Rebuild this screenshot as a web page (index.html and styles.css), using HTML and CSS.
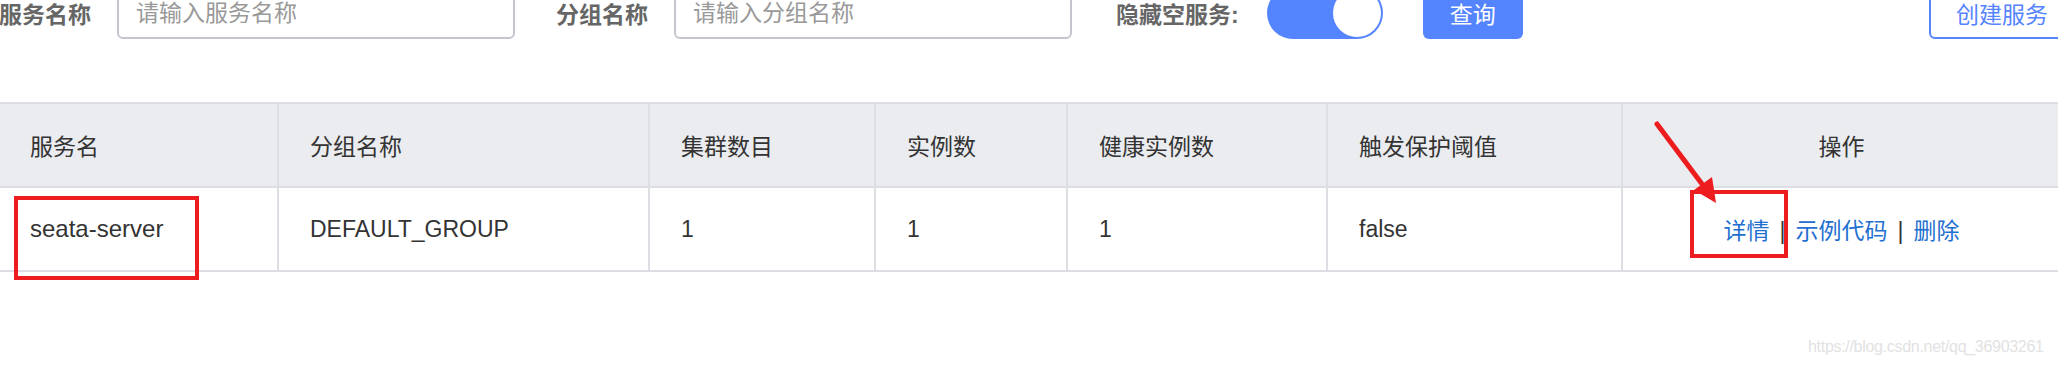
FILE: index.html
```html
<!DOCTYPE html>
<html lang="zh-CN">
<head>
  <meta charset="UTF-8">
  <title>服务列表</title>
  <link rel="stylesheet" href="styles.css">
</head>
<body>

  <div class="toolbar">
    <div class="field">
      <label class="field-label">服务名称</label>
      <input class="field-input" type="text" placeholder="请输入服务名称">
    </div>
    <div class="field field-group">
      <label class="field-label">分组名称</label>
      <input class="field-input" type="text" placeholder="请输入分组名称">
    </div>
    <div class="field">
      <label class="field-label switch-label">隐藏空服务:</label>
      <span class="switch"><span class="switch-knob"></span></span>
    </div>
    <button class="btn btn-primary">查询</button>
    <button class="btn btn-outline">创建服务</button>
  </div>

  <table class="service-table">
    <colgroup>
      <col style="width: 277px">
      <col style="width: 371px">
      <col style="width: 226px">
      <col style="width: 192px">
      <col style="width: 260px">
      <col style="width: 295px">
      <col>
    </colgroup>
    <thead>
      <tr>
        <th>服务名</th>
        <th>分组名称</th>
        <th>集群数目</th>
        <th>实例数</th>
        <th>健康实例数</th>
        <th>触发保护阈值</th>
        <th class="center">操作</th>
      </tr>
    </thead>
    <tbody>
      <tr>
        <td class="name">seata-server</td>
        <td>DEFAULT_GROUP</td>
        <td>1</td>
        <td>1</td>
        <td>1</td>
        <td>false</td>
        <td class="center">
          <a class="link" href="#">详情</a><span class="sep">|</span><a class="link" href="#">示例代码</a><span class="sep">|</span><a class="link" href="#">删除</a>
        </td>
      </tr>
    </tbody>
  </table>

  <!-- annotations drawn on top of the screenshot -->
  <div class="mark mark-name"></div>
  <div class="mark mark-detail"></div>
  <svg class="arrow" width="2058" height="366" viewBox="0 0 2058 366">
    <line x1="1657" y1="124" x2="1705" y2="188" stroke="#ec1c1f" stroke-width="5" stroke-linecap="round"/>
    <polygon points="1716,203 1694,190 1712,177" fill="#ec1c1f"/>
  </svg>

  <div class="watermark">https://blog.csdn.net/qq_36903261</div>

</body>
</html>
```

FILE: styles.css
```css
body {
  margin: 0;
  width: 2058px;
  height: 366px;
  overflow: hidden;
  position: relative;
  background: #fff;
  font-family: "Liberation Sans", "Noto Sans CJK SC", sans-serif;
  font-size: 23px;
  color: #333;
}

.toolbar {
  display: flex;
  align-items: center;
  height: 52px;
  margin-top: -13px;
  margin-left: -1px;
}

.field {
  display: flex;
  align-items: center;
  margin-right: 41px;
}

.field-group {
  margin-right: 44px;
}

.field-label {
  font-weight: bold;
  color: #666;
  margin-right: 26px;
}

.switch-label {
  margin-right: 28px;
}

.field-input {
  box-sizing: border-box;
  width: 398px;
  height: 52px;
  padding: 0 17px;
  border: 2px solid #c4c6cf;
  border-radius: 6px;
  font-family: inherit;
  font-size: 23px;
  color: #333;
  outline: none;
}

.field-input::placeholder {
  color: #999;
}

.switch {
  box-sizing: border-box;
  display: flex;
  justify-content: flex-end;
  align-items: center;
  width: 116px;
  height: 52px;
  padding: 2px;
  border-radius: 26px;
  background: #5584ff;
  margin-right: -1px;
}

.switch-knob {
  width: 48px;
  height: 48px;
  border-radius: 50%;
  background: #fff;
}

.btn {
  box-sizing: border-box;
  height: 52px;
  border-radius: 6px;
  font-family: inherit;
  font-size: 23px;
  cursor: pointer;
}

.btn-primary {
  width: 100px;
  border: none;
  background: #5584ff;
  color: #fff;
}

.btn-outline {
  margin-left: auto;
  margin-right: -17px;
  padding: 0 25px;
  border: 2px solid #5584ff;
  background: #fff;
  color: #5584ff;
}

.service-table {
  width: 100%;
  margin-top: 63px;
  table-layout: fixed;
  border-collapse: separate;
  border-spacing: 0;
  border-top: 2px solid #dcdee3;
}

.service-table th,
.service-table td {
  box-sizing: border-box;
  height: 84px;
  padding: 0 0 0 31px;
  border-bottom: 2px solid #dcdee3;
  border-left: 2px solid #dcdee3;
  text-align: left;
  font-weight: normal;
  white-space: nowrap;
}

.service-table th:first-child,
.service-table td:first-child {
  border-left: none;
  padding-left: 30px;
}

.service-table th {
  background: #ebecf0;
}

.service-table .name {
  font-size: 24px;
}

.service-table .center {
  text-align: center;
  padding: 0 0 0 2px;
}

.link {
  color: #1f6fd0;
  text-decoration: none;
}

.sep {
  margin: 0 10px;
  color: #333;
}

.mark {
  position: absolute;
  box-sizing: border-box;
  border: 4px solid #ec1c1f;
}

.mark-name {
  left: 14px;
  top: 196px;
  width: 185px;
  height: 84px;
}

.mark-detail {
  left: 1690px;
  top: 190px;
  width: 98px;
  height: 68px;
}

.arrow {
  position: absolute;
  left: 0;
  top: 0;
}

.watermark {
  position: absolute;
  left: 1808px;
  top: 338px;
  font-size: 16px;
  letter-spacing: -0.3px;
  color: #e2e2e2;
}
```
